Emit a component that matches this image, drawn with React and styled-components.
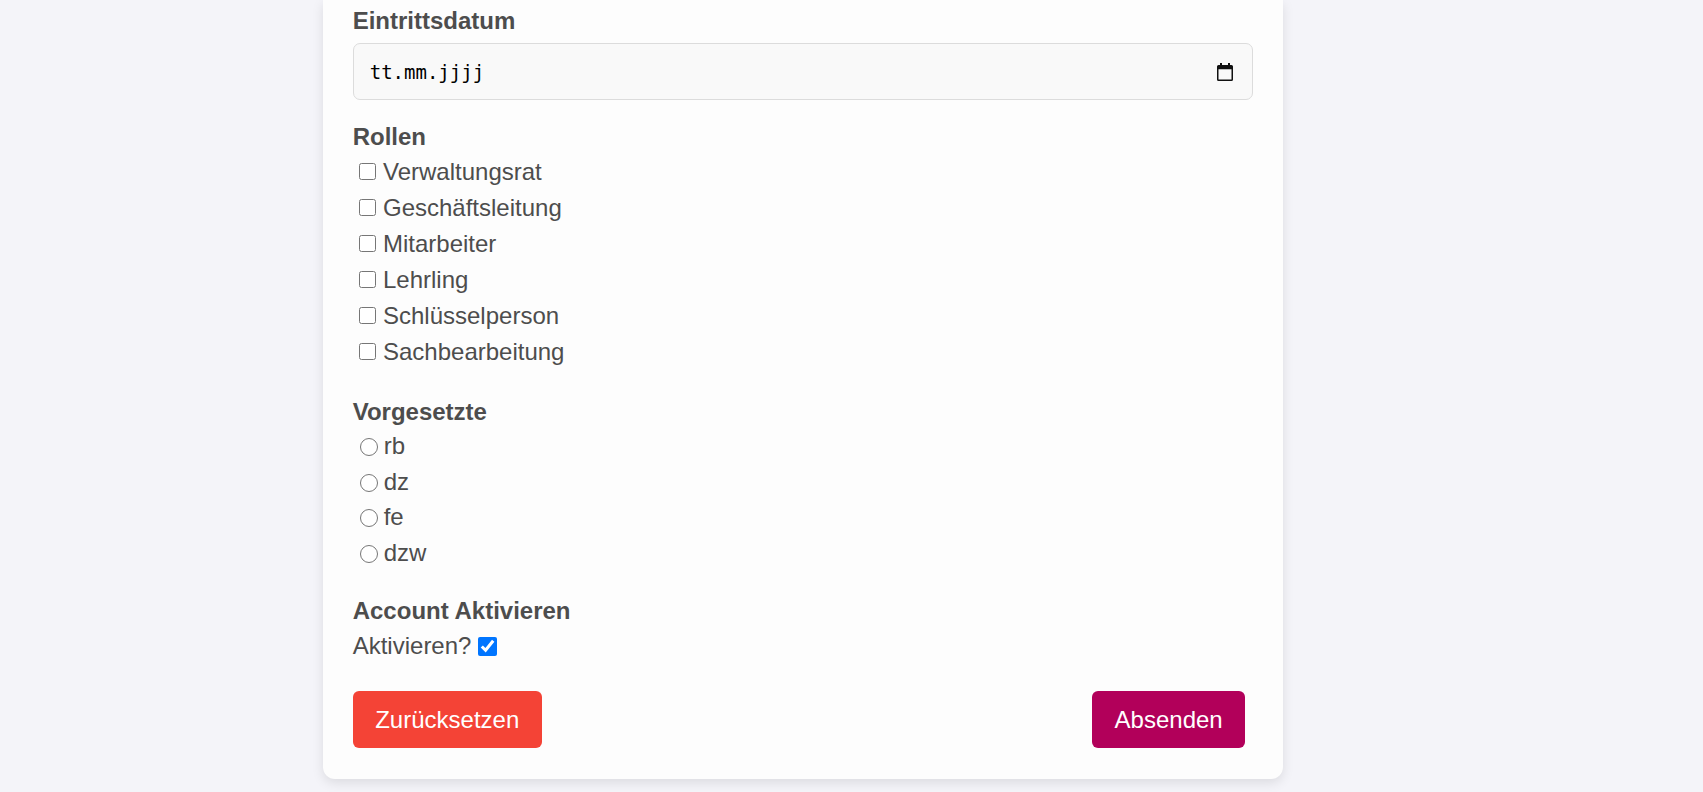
import styled, { createGlobalStyle } from 'styled-components';

const roles = [
    'Verwaltungsrat',
    'Geschäftsleitung',
    'Mitarbeiter',
    'Lehrling',
    'Schlüsselperson',
    'Sachbearbeitung',
];

const supervisors = ['rb', 'dz', 'fe', 'dzw'];

export default function App() {
    return (
        <>
            <GlobalStyle />
            <Page>
                <Card onSubmit={(e) => e.preventDefault()}>
                    <Group $gap={22.7}>
                        <Label $space={8.3}>Eintrittsdatum</Label>
                        <DateField>
                            <span>tt.mm.jjjj</span>
                            <CalendarIcon />
                        </DateField>
                    </Group>

                    <Group $gap={28}>
                        <Label $space={2.9}>Rollen</Label>
                        {roles.map((role) => (
                            <OptionRow key={role} $h={36}>
                                <Check type="checkbox" name="rollen" />
                                {role}
                            </OptionRow>
                        ))}
                    </Group>

                    <Group $gap={26}>
                        <Label $space={2.8}>Vorgesetzte</Label>
                        {supervisors.map((s) => (
                            <OptionRow key={s} $h={35.5}>
                                <Radio type="radio" name="vorgesetzte" />
                                {s}
                            </OptionRow>
                        ))}
                    </Group>

                    <Group $gap={26.3}>
                        <Label $space={3.8}>Account Aktivieren</Label>
                        <OptionRow $h={36}>
                            Aktivieren?
                            <ActivateCheck type="checkbox" defaultChecked />
                        </OptionRow>
                    </Group>

                    <Actions>
                        <Button type="reset" $color="#f44336">
                            Zurücksetzen
                        </Button>
                        <Button type="submit" $color="#b2005a" $offset={7.5}>
                            Absenden
                        </Button>
                    </Actions>
                </Card>
            </Page>
        </>
    );
}

function CalendarIcon() {
    return (
        <svg width="16" height="18" viewBox="0 0 16 18" fill="#111">
            <path d="M3 0h2v3H3z M11 0h2v3h-2z" />
            <path
                fillRule="evenodd"
                d="M1.5 2h13A1.5 1.5 0 0 1 16 3.5v13A1.5 1.5 0 0 1 14.5 18h-13A1.5 1.5 0 0 1 0 16.5v-13A1.5 1.5 0 0 1 1.5 2zM1.5 6.2v10.3h13V6.2z"
            />
        </svg>
    );
}

const GlobalStyle = createGlobalStyle`
    html, body {
        margin: 0;
        padding: 0;
    }

    body {
        background: #f4f4f9;
        font-family: 'Liberation Sans', Arial, sans-serif;
        color: #4d4d4d;
        overflow: hidden;
    }
`;

const Page = styled.div`
    display: flex;
    padding: 0 0 13px 322.7px;
`;

const Card = styled.form`
    width: 960px;
    box-sizing: border-box;
    padding: 7px 30px 30.3px;
    background: #fdfdfd;
    border-radius: 0 0 12px 12px;
    box-shadow: 0 4px 12px rgba(0, 0, 0, 0.1);
`;

const Group = styled.div`
    margin-bottom: ${({ $gap }) => $gap}px;
`;

const Label = styled.div`
    font-size: 24px;
    font-weight: 700;
    line-height: 28px;
    margin-bottom: ${({ $space }) => $space}px;
`;

const DateField = styled.div`
    display: flex;
    align-items: center;
    justify-content: space-between;
    height: 57px;
    box-sizing: border-box;
    padding: 0 19px 0 16px;
    background: #f9f9f9;
    border: 1px solid #dcdcdc;
    border-radius: 7px;

    span {
        font-family: 'DejaVu Sans Mono', 'Liberation Mono', monospace;
        font-size: 19px;
        color: #000;
    }
`;

const OptionRow = styled.label`
    display: flex;
    align-items: center;
    height: ${({ $h }) => $h}px;
    font-size: 24px;
`;

const Check = styled.input`
    width: 17px;
    height: 17px;
    margin: 0 7.3px 0 6px;
`;

const Radio = styled.input`
    appearance: none;
    flex: none;
    width: 18px;
    height: 18px;
    box-sizing: border-box;
    margin: 2px 6px 0 7px;
    border: 1.3px solid #767676;
    border-radius: 50%;
    background: #fff;

    &:checked {
        border-color: #0075ff;
        box-shadow: inset 0 0 0 3px #fff;
        background: #0075ff;
    }
`;

const ActivateCheck = styled.input`
    width: 19px;
    height: 19px;
    margin: 0 0 0 7px;
`;

const Actions = styled.div`
    display: flex;
    justify-content: space-between;
`;

const Button = styled.button`
    padding: 15px 22.5px;
    margin-right: ${({ $offset }) => $offset || 0}px;
    border: none;
    border-radius: 6px;
    background: ${({ $color }) => $color};
    color: #fff;
    font-family: 'Liberation Sans', Arial, sans-serif;
    font-size: 24px;
    line-height: 27.6px;
    cursor: pointer;
`;
